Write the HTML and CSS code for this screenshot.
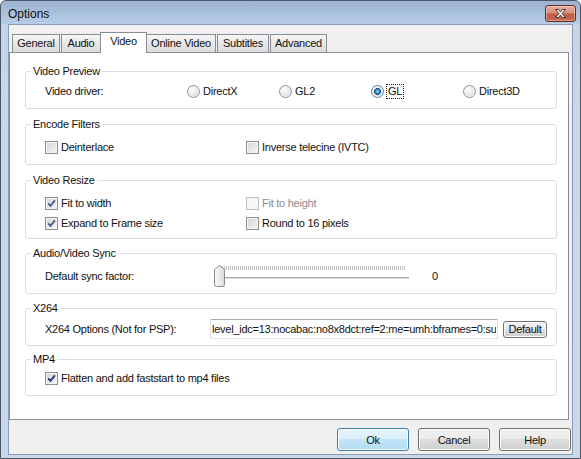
FILE: index.html
```html
<!DOCTYPE html>
<html lang="en">
<head>
    <meta charset="UTF-8">
    <meta name="viewport" content="width=device-width, initial-scale=1.0">
    <title>Options</title>
    <link rel="stylesheet" href="styles.css">
</head>
<body>
    <div class="window">
        <div class="titlebar">
            <span class="title">Options</span>
            <span class="close">
                <svg width="13" height="11" viewBox="0 0 13 11"><path d="M1.5 1.5h3l2 2.5 2-2.5h3l-3.5 4 3.5 4h-3l-2-2.5-2 2.5h-3l3.5-4z" fill="#fff" stroke="#3b3b3b" stroke-width="1" stroke-linejoin="round"/></svg>
            </span>
        </div>

        <div class="client">
            <div class="tabs">
                <div class="tab tab-general">General</div>
                <div class="tab tab-audio">Audio</div>
                <div class="tab tab-video selected">Video</div>
                <div class="tab tab-online">Online Video</div>
                <div class="tab tab-subs">Subtitles</div>
                <div class="tab tab-adv">Advanced</div>
            </div>

            <div class="panel">
                <fieldset class="group group-preview">
                    <legend>Video Preview</legend>
                    <div class="body">
                        <div class="row">
                            <span class="driver-label">Video driver:</span>
                            <span class="option"><span class="radio"></span>DirectX</span>
                            <span class="option"><span class="radio"></span>GL2</span>
                            <span class="option"><span class="radio on"></span><span class="focus">GL</span></span>
                            <span class="option"><span class="radio"></span>Direct3D</span>
                        </div>
                    </div>
                </fieldset>

                <fieldset class="group group-filters">
                    <legend>Encode Filters</legend>
                    <div class="body">
                        <div class="row">
                            <span class="option col"><span class="check"></span>Deinterlace</span>
                            <span class="option"><span class="check"></span>Inverse telecine (IVTC)</span>
                        </div>
                    </div>
                </fieldset>

                <fieldset class="group group-resize">
                    <legend>Video Resize</legend>
                    <div class="body">
                        <div class="row">
                            <span class="option col"><span class="check"><svg viewBox="0 0 11 11" width="11" height="11"><path d="M2.2 5.3 4.5 7.9 8.9 2.4"/></svg></span>Fit to width</span>
                            <span class="option disabled"><span class="check"></span>Fit to height</span>
                        </div>
                        <div class="row">
                            <span class="option col"><span class="check"><svg viewBox="0 0 11 11" width="11" height="11"><path d="M2.2 5.3 4.5 7.9 8.9 2.4"/></svg></span>Expand to Frame size</span>
                            <span class="option"><span class="check"></span>Round to 16 pixels</span>
                        </div>
                    </div>
                </fieldset>

                <fieldset class="group group-sync">
                    <legend>Audio/Video Sync</legend>
                    <div class="body">
                        <div class="row row-slider">
                            <span class="sync-label">Default sync factor:</span>
                            <div class="slider">
                                <div class="ticks"></div>
                                <div class="track"></div>
                                <svg class="thumb" width="11" height="22" viewBox="0 0 11 22">
                                    <defs>
                                        <linearGradient id="thumbFill" x1="0" y1="0" x2="1" y2="0">
                                            <stop offset="0" stop-color="#fbfbfb"/>
                                            <stop offset="1" stop-color="#dadada"/>
                                        </linearGradient>
                                    </defs>
                                    <path d="M5.5 .5 10.5 4.5V19.5Q10.5 21.5 8.5 21.5H2.5Q.5 21.5 .5 19.5V4.5Z" fill="url(#thumbFill)" stroke="#8a8a8a"/>
                                </svg>
                            </div>
                            <span class="sync-value">0</span>
                        </div>
                    </div>
                </fieldset>

                <fieldset class="group group-x264">
                    <legend>X264</legend>
                    <div class="body">
                        <div class="row row-input">
                            <span class="x264-label">X264 Options (Not for PSP):</span>
                            <input class="text" type="text" value="level_idc=13:nocabac:no8x8dct:ref=2:me=umh:bframes=0:subq=6:trellis=0">
                            <span class="btn btn-small">Default</span>
                        </div>
                    </div>
                </fieldset>

                <fieldset class="group group-mp4">
                    <legend>MP4</legend>
                    <div class="body">
                        <div class="row">
                            <span class="option"><span class="check dark"><svg viewBox="0 0 11 11" width="11" height="11"><path d="M2.2 5.3 4.5 7.9 8.9 2.4"/></svg></span>Flatten and add faststart to mp4 files</span>
                        </div>
                    </div>
                </fieldset>
            </div>

            <div class="buttons">
                <span class="btn btn-default">Ok</span>
                <span class="btn">Cancel</span>
                <span class="btn">Help</span>
            </div>
        </div>
    </div>
</body>
</html>
```

FILE: styles.css
```css
* {
    box-sizing: border-box;
}
body {
    margin: 0;
    font-family: "Liberation Sans", Arial, sans-serif;
    font-size: 11px;
    letter-spacing: -0.25px;
    color: #111;
}

/* window frame */
.window {
    width: 581px;
    height: 459px;
    border: 1px solid #4b5667;
    border-radius: 6px 6px 0 0;
    background: linear-gradient(#9bb3d0 0px, #b7cde6 23px, #c3d6ec 23px, #c6d9ee 100%);
    display: flex;
    flex-direction: column;
    overflow: hidden;
}
.titlebar {
    height: 23px;
    display: flex;
    align-items: flex-start;
    justify-content: space-between;
    padding: 0 4px 0 7px;
}
.title {
    font-size: 12px;
    line-height: 14px;
    letter-spacing: 0;
    padding-top: 6px;
    color: #111;
}
.close {
    margin-top: 4px;
    width: 31px;
    height: 17px;
    border: 1px solid #642b20;
    border-radius: 3px;
    background: linear-gradient(#e6ab9c 0%, #d98d7b 48%, #c45a42 52%, #cb6a4f 100%);
    box-shadow: inset 0 0 0 1px rgba(255, 255, 255, 0.35);
    display: flex;
    justify-content: center;
    align-items: center;
}

.client {
    flex: 1;
    margin: 0 7px 3px;
    border: 1px solid #8d9bae;
    background: #f0f0f0;
    padding: 7px 3px 0 0;
    display: flex;
    flex-direction: column;
}

/* tab strip */
.tabs {
    display: flex;
    align-items: flex-end;
    height: 20px;
    padding-left: 3px;
}
.tab {
    height: 18px;
    line-height: 16px;
    text-align: center;
    border: 1px solid #898c95;
    border-bottom: 0;
    background: linear-gradient(#f6f6f6, #e8e8e8 50%, #dcdcdc);
}
.tab.selected {
    height: 21px;
    line-height: 17px;
    margin-bottom: -1px;
    background: #fff;
    position: relative;
    z-index: 1;
}
.tab-general { width: 48px; }
.tab-audio { width: 40px; margin-left: 1px; }
.tab-video { width: 47px; margin-left: -1px; }
.tab-online { width: 70px; margin-left: -1px; }
.tab-subs { width: 52px; margin-left: 1px; }
.tab-adv { width: 57px; margin-left: 1px; }

.panel {
    height: 368px;
    border: 1px solid #898c95;
    background: #fff;
    padding: 11px 11px 0 15px;
}

/* group boxes */
.group {
    margin: 0;
    padding: 0;
    min-width: 0;
    border: 1px solid #d5dfe5;
    border-radius: 3px;
}
.group legend {
    padding: 0 2px;
    margin-left: 5px;
    line-height: 15px;
}
.group-filters,
.group-resize { margin-top: 8px; }
.group-sync,
.group-x264 { margin-top: 7px; }
.group-mp4 { margin-top: 6px; }

.body {
    padding-left: 19px;
}
.group-preview .body { padding-top: 4px; padding-bottom: 9px; }
.group-filters .body { padding-top: 7px; padding-bottom: 9px; }
.group-resize .body { padding-top: 7px; padding-bottom: 7px; }
.group-sync .body { padding-top: 4px; padding-bottom: 6px; }
.group-x264 .body { padding-top: 3px; padding-bottom: 6px; }
.group-mp4 .body { padding-top: 3px; padding-bottom: 9px; }

.row {
    display: flex;
    align-items: center;
    height: 16px;
}
.row + .row {
    margin-top: 4px;
}
.row-slider { height: 22px; }
.row-input { height: 20px; }

.driver-label { width: 142px; }
.option {
    display: flex;
    align-items: center;
    gap: 3px;
    white-space: nowrap;
}
.group-preview .option { width: 92px; }
.col { width: 201px; }
.disabled { color: #8a8a8a; }

/* radio buttons */
.radio {
    flex: none;
    width: 13px;
    height: 13px;
    border: 1px solid #8e8f8f;
    border-radius: 50%;
    background: radial-gradient(circle at 40% 35%, #ffffff 0, #e4e4e4 55%, #cdcdcd 100%);
    box-shadow: inset 0 0 0 1px #f6f6f6;
}
.radio.on {
    border-color: #5d7ea0;
    background:
        radial-gradient(circle, #a9e0fb 0, #3c95d4 1.6px, #1b4f7f 3.2px, rgba(0, 0, 0, 0) 3.8px),
        radial-gradient(circle at 40% 35%, #ffffff 0, #e4e4e4 55%, #cdcdcd 100%);
}
.focus {
    outline: 1px dotted #222;
    padding: 0 1px;
    line-height: 13px;
}

/* check boxes */
.check {
    flex: none;
    width: 13px;
    height: 13px;
    border: 1px solid #8f8f8f;
    background: linear-gradient(135deg, #d2d4d8, #f6f6f6);
    box-shadow: inset 0 0 0 1px #f4f4f4;
    display: flex;
    align-items: center;
    justify-content: center;
}
.check path {
    fill: none;
    stroke: #4a5d8c;
    stroke-width: 1.8;
}
.check.dark path {
    stroke: #23337a;
}
.disabled .check {
    border-color: #bdbdbd;
    background: #f6f6f6;
    box-shadow: none;
}

/* slider */
.sync-label { width: 169px; }
.slider {
    position: relative;
    width: 196px;
    height: 22px;
}
.ticks {
    margin: 1px 0 0 6px;
    width: 186px;
    height: 4px;
    background: repeating-linear-gradient(90deg, #c2c2c2 0 1px, transparent 1px 2px);
}
.track {
    margin: 7px 0 0 1px;
    width: 194px;
    height: 2px;
    border-top: 1px solid #a4a4a4;
    border-bottom: 1px solid #dcdcdc;
}
.thumb {
    position: absolute;
    left: 0;
    top: 0;
}
.sync-value {
    margin-left: 22px;
}

/* x264 options */
.x264-label { width: 165px; }
.text {
    width: 288px;
    height: 20px;
    margin: 0;
    padding: 0 1px;
    font: inherit;
    letter-spacing: inherit;
    color: #111;
    border: 1px solid;
    border-color: #abadb3 #dbdfe6 #e3e9ef #e2e3ea;
    outline: none;
}

/* push buttons */
.btn {
    display: flex;
    align-items: center;
    justify-content: center;
    width: 72px;
    height: 23px;
    border: 1px solid #707070;
    border-radius: 3px;
    background: linear-gradient(#f2f2f2 0%, #ebebeb 45%, #dddddd 50%, #cfcfcf 100%);
    box-shadow: inset 0 0 0 1px #fbfbfb;
}
.btn-small {
    width: 44px;
    height: 17px;
    margin-left: 5px;
}
.btn-default {
    border-color: #3c7fb1;
    background: linear-gradient(#e8f5fc 0%, #d9effb 45%, #c4e5f7 50%, #b3dcf3 100%);
}
.buttons {
    display: flex;
    justify-content: flex-end;
    gap: 9px;
    margin-top: 8px;
    margin-right: -2px;
}
```
